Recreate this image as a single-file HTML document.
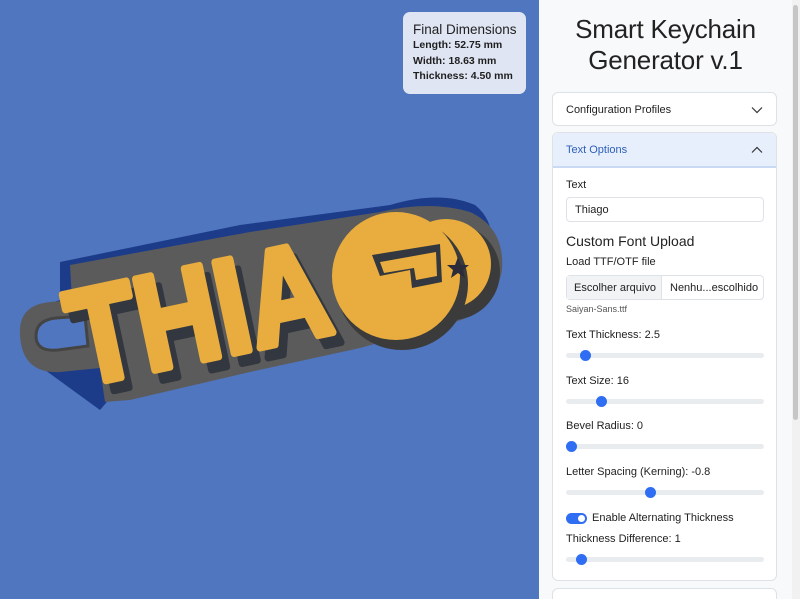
<!DOCTYPE html>
<html><head><meta charset="utf-8"><style>
*{box-sizing:border-box;margin:0;padding:0}
html,body{width:800px;height:599px;overflow:hidden}
body{font-family:"Liberation Sans",sans-serif;background:#5076c0;position:relative}
#view{position:absolute;left:0;top:0;width:539px;height:599px;background:#5076c0}
#dim{position:absolute;left:403px;top:12px;width:123px;height:82px;background:#dfe5f3;border-radius:7px;padding:10px 10px;color:#1f1f1f;white-space:nowrap}
#dim .t{font-size:13.5px;margin-bottom:1px}
#dim .r{font-size:10.5px;font-weight:bold;line-height:15.5px}
#panel{position:absolute;left:539px;top:0;width:253px;height:599px;background:#f8f9fa;overflow:hidden}
#sb{position:absolute;left:792px;top:0;width:8px;height:599px;background:#f1f1f1}
#sb div{position:absolute;left:1px;top:5px;width:5px;height:415px;background:#c6c6c6;border-radius:3px}
h1{font-weight:normal;font-size:26px;text-align:center;color:#222;line-height:31px;margin-top:14px;letter-spacing:-0.2px}
.card{position:absolute;left:13px;width:225px;background:#fff;border:1px solid #dee2e6;border-radius:6px}
.hd{height:33px;padding:0 13px;font-size:11px;display:flex;align-items:center;justify-content:space-between;color:#222}
.lab{position:absolute;left:13px;font-size:11px;color:#222;white-space:nowrap}
.rng{position:absolute;left:13px;width:198px;height:5px;background:#e9ecef;border-radius:3px}
.rng i{position:absolute;top:-3px;width:11px;height:11px;border-radius:50%;background:#2f6ef3}
</style></head><body>
<div id="view">
<svg width="539" height="599" viewBox="0 0 539 599">
  <path d="M30 310 L60 300 L60 262 L240 225 L390 205 Q440 190 475 205 Q500 225 488 265 L420 300 L330 330 L130 375 L100 410 L45 370 Z" fill="#1c3c8a"/>
  <path d="M20 335 Q18 305 50 302 L72 300 L70 265 L250 232 L380 212 Q430 200 470 212 Q505 228 502 270 Q495 310 455 322 L360 348 L250 372 L130 400 L105 402 L100 368 L60 372 Q22 374 20 335 Z" fill="#5b5b5b"/>
  <path d="M36 336 Q36 320 56 318 L85 316 L88 346 L58 350 Q36 352 36 336 Z" fill="#5076c0" stroke="#444" stroke-width="3"/>
  <text x="0" y="0" transform="translate(88,396) rotate(-12) scale(1,1.25)" font-family="Liberation Sans" font-weight="bold" font-size="108" fill="#33373f" stroke="#33373f" stroke-width="6" stroke-linejoin="round" textLength="262" lengthAdjust="spacingAndGlyphs">THIA</text>
  <text x="0" y="0" transform="translate(80,386) rotate(-12) scale(1,1.25)" font-family="Liberation Sans" font-weight="bold" font-size="108" fill="#e8ad3e" stroke="#e8ad3e" stroke-width="6" stroke-linejoin="round" textLength="262" lengthAdjust="spacingAndGlyphs">THIA</text>
  <circle cx="452" cy="272" r="48" fill="#3b3b3b"/>
  <circle cx="446" cy="264" r="45" fill="#e8ad3e"/>
  <circle cx="402" cy="284" r="66" fill="#3b3b3b"/>
  <circle cx="396" cy="276" r="64" fill="#e8ad3e"/>
  <path d="M372 255 L440 244 L442 282 L412 288 L410 270 L380 276 Z" fill="#33373f"/>
  <path d="M380 262 L436 252 L437 276 L416 280 L414 268 L384 273 Z" fill="#e8ad3e"/>
  <path d="M458 257 l3 8 l8 0 l-6 5 l2 8 l-7 -5 l-7 5 l2 -8 l-6 -5 l8 0 Z" fill="#2b2b3a"/>
</svg>
<div id="dim"><div class="t">Final Dimensions</div><div class="r">Length: 52.75 mm</div><div class="r">Width: 18.63 mm</div><div class="r">Thickness: 4.50 mm</div></div>
</div>
<div id="panel">
 <h1>Smart Keychain<br>Generator v.1</h1>
 <div class="card" style="top:92px;height:34px"><div class="hd">Configuration Profiles<svg width="12" height="8"><path d="M1 1.5 L6 6.5 L11 1.5" fill="none" stroke="#333" stroke-width="1.2"/></svg></div></div>
 <div class="card" style="top:132px;height:449px">
  <div class="hd" style="background:#e7effd;color:#2d5fb8;border-bottom:2px solid #c9d8f3;height:35px;border-radius:6px 6px 0 0">Text Options<svg width="12" height="8"><path d="M1 6.5 L6 1.5 L11 6.5" fill="none" stroke="#333" stroke-width="1.2"/></svg></div>
  <div class="lab" style="top:46px">Text</div>
  <div style="position:absolute;left:13px;top:64px;width:198px;height:25px;border:1px solid #dee2e6;border-radius:4px;font-size:11px;padding:6px 8px;color:#222">Thiago</div>
  <div class="lab" style="top:100px;font-size:14px">Custom Font Upload</div>
  <div class="lab" style="top:123px">Load TTF/OTF file</div>
  <div style="position:absolute;left:13px;top:142px;width:198px;height:25px;border:1px solid #dee2e6;border-radius:4px;font-size:11px;display:flex;color:#222;white-space:nowrap">
   <div style="width:95px;background:#f1f3f5;border-right:1px solid #dee2e6;padding:6px 7px">Escolher arquivo</div><div style="padding:6px 8px">Nenhu...escolhido</div></div>
  <div class="lab" style="top:171px;font-size:9px;color:#555">Saiyan-Sans.ttf</div>
  <div class="lab" style="top:196px">Text Thickness: 2.5</div>
  <div class="rng" style="top:220px"><i style="left:14px"></i></div>
  <div class="lab" style="top:242px">Text Size: 16</div>
  <div class="rng" style="top:266px"><i style="left:30px"></i></div>
  <div class="lab" style="top:287px">Bevel Radius: 0</div>
  <div class="rng" style="top:311px"><i style="left:0px"></i></div>
  <div class="lab" style="top:333px">Letter Spacing (Kerning): -0.8</div>
  <div class="rng" style="top:357px"><i style="left:79px"></i></div>
  <div style="position:absolute;left:13px;top:380px;width:21px;height:11px;border-radius:6px;background:#2f6ef3"><div style="position:absolute;right:2px;top:2px;width:7px;height:7px;border-radius:50%;background:#fff"></div></div>
  <div class="lab" style="top:379px;left:39px">Enable Alternating Thickness</div>
  <div class="lab" style="top:400px">Thickness Difference: 1</div>
  <div class="rng" style="top:424px"><i style="left:10px"></i></div>
 </div>
 <div class="card" style="top:588px;height:20px"></div>
</div>
<div id="sb"><div></div></div>
</body></html>
